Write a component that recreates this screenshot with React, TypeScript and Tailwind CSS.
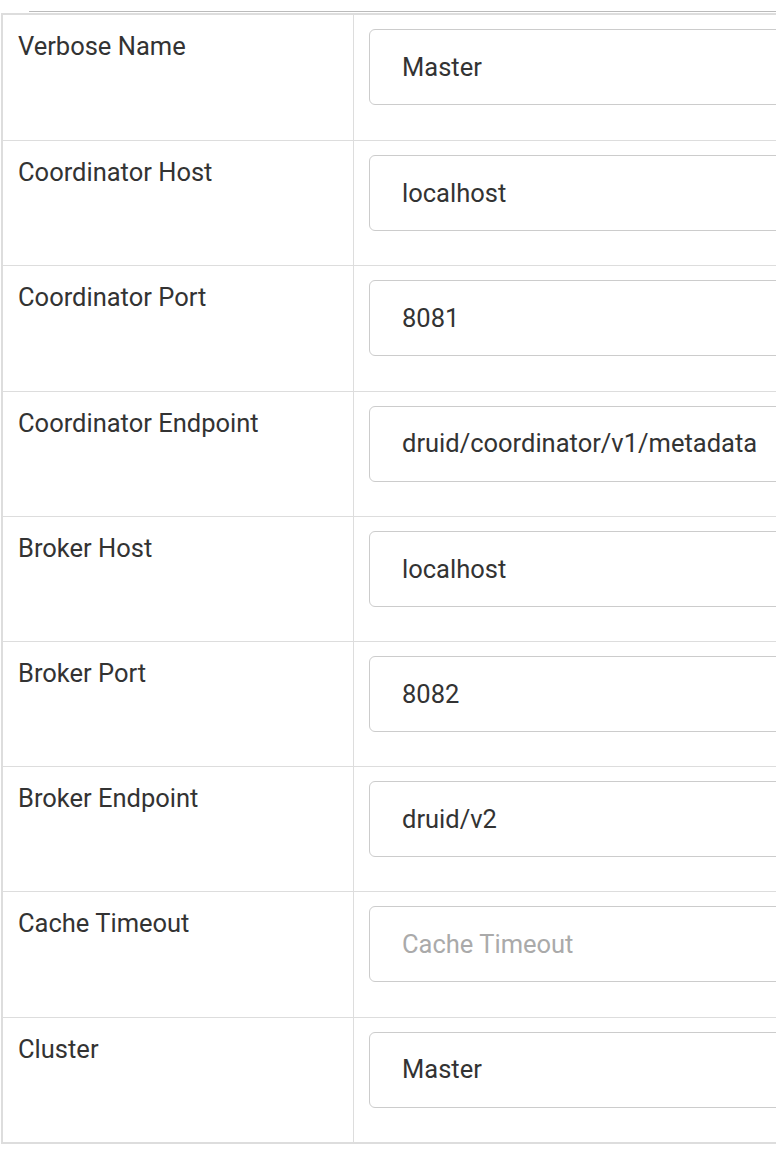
const rows: { label: string; value: string; placeholder?: boolean }[] = [
  { label: "Verbose Name", value: "Master" },
  { label: "Coordinator Host", value: "localhost" },
  { label: "Coordinator Port", value: "8081" },
  { label: "Coordinator Endpoint", value: "druid/coordinator/v1/metadata" },
  { label: "Broker Host", value: "localhost" },
  { label: "Broker Port", value: "8082" },
  { label: "Broker Endpoint", value: "druid/v2" },
  { label: "Cache Timeout", value: "Cache Timeout", placeholder: true },
  { label: "Cluster", value: "Master" },
];

export default function App() {
  return (
    <div
      className="w-[776px] h-[1156px] overflow-hidden bg-white text-[#333]"
      style={{ fontFamily: "Roboto, 'Liberation Sans', sans-serif" }}
    >
      <div className="pt-[11px] pl-[29px]">
        <div className="h-px bg-[#bbb]" />
      </div>
      <div className="mt-px w-[1000px] border-t-2 border-b-2 border-l-2 border-[#ddd] ml-px">
        {rows.map((row, i) => (
          <div
            key={row.label}
            className={
              "grid grid-cols-[351px_1fr] h-[125.2px] " +
              (i > 0 ? "border-t border-[#ddd]" : "")
            }
          >
            <div className="border-r border-[#ddd] pl-[15px] pt-[12px] text-[25.5px] leading-[38px]">
              {row.label}
            </div>
            <div className="pl-[15px] pt-[14px]">
              <div className="h-[76px] w-[600px] border border-[#ccc] rounded-[6px] pl-[32px] flex items-center text-[25.5px]">
                <span className={row.placeholder ? "text-[#aaa]" : "text-[#333]"}>
                  {row.value}
                </span>
              </div>
            </div>
          </div>
        ))}
      </div>
    </div>
  );
}
